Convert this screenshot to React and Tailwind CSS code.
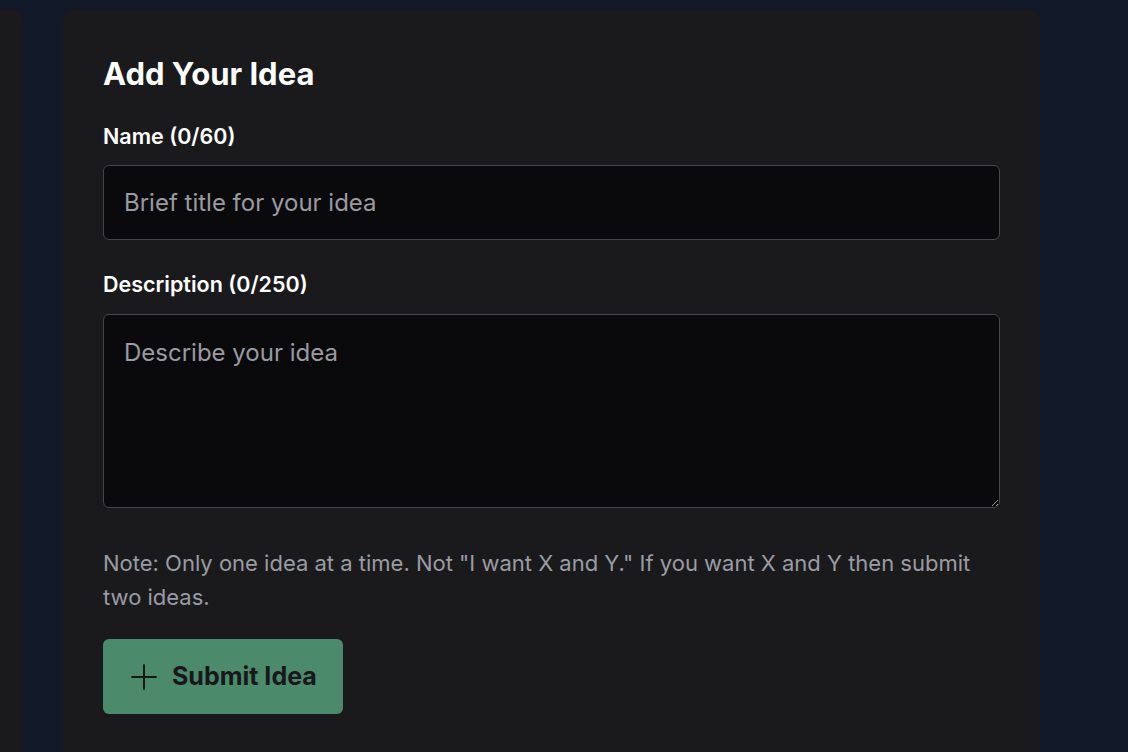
export default function App() {
  return (
    <div className="min-h-screen w-full bg-[#111827] overflow-hidden" style={{ fontFamily: 'Inter, "Noto Sans", sans-serif' }}>
      <div className="flex gap-10 pt-[9px] h-[752px]">
        {/* left sidebar card (cut off) */}
        <div className="w-[23px] shrink-0 rounded-tr-xl bg-[#1a1a1c]" />

        {/* main card */}
        <div className="w-[977px] shrink-0 rounded-t-xl bg-[#1a1a1c] px-10 pt-[47px]">
          <h2 className="text-[31px] leading-9 font-bold text-white">Add Your Idea</h2>

          <form className="mt-[29px]" onSubmit={e => e.preventDefault()}>
            <label className="block text-[21.5px] leading-[30px] font-semibold text-white">Name (0/60)</label>
            <input
              type="text"
              placeholder="Brief title for your idea"
              className="mt-[14px] block w-full h-[75px] rounded-md border border-[#45454b] bg-[#0a0a0c] px-5 text-[24px] text-white placeholder:text-[#9a9aa0] outline-none"
            />

            <label className="mt-[29px] block text-[21.5px] leading-[30px] font-semibold text-white">Description (0/250)</label>
            <textarea
              placeholder="Describe your idea"
              className="mt-[15px] block w-full h-[194px] rounded-md border border-[#45454b] bg-[#0a0a0c] px-5 pt-[22px] text-[24px] leading-8 text-white placeholder:text-[#9a9aa0] outline-none resize-y"
            />

            <p className="mt-[38px] text-[22px] leading-[34px] text-[#9a9ca3]">
              Note: Only one idea at a time. Not "I want X and Y." If you want X and Y then submit two ideas.
            </p>

            <button
              type="submit"
              className="mt-[25px] flex items-center gap-[15px] h-[75px] w-[240px] rounded-md bg-[#4b8a6b] pl-7 text-[25px] font-bold text-[#18181b]"
            >
              <svg width="26" height="26" viewBox="0 0 26 26" fill="none" stroke="currentColor" strokeWidth="2" strokeLinecap="round">
                <path d="M13 1v24M1 13h24" />
              </svg>
              Submit Idea
            </button>
          </form>
        </div>
      </div>
    </div>
  );
}
